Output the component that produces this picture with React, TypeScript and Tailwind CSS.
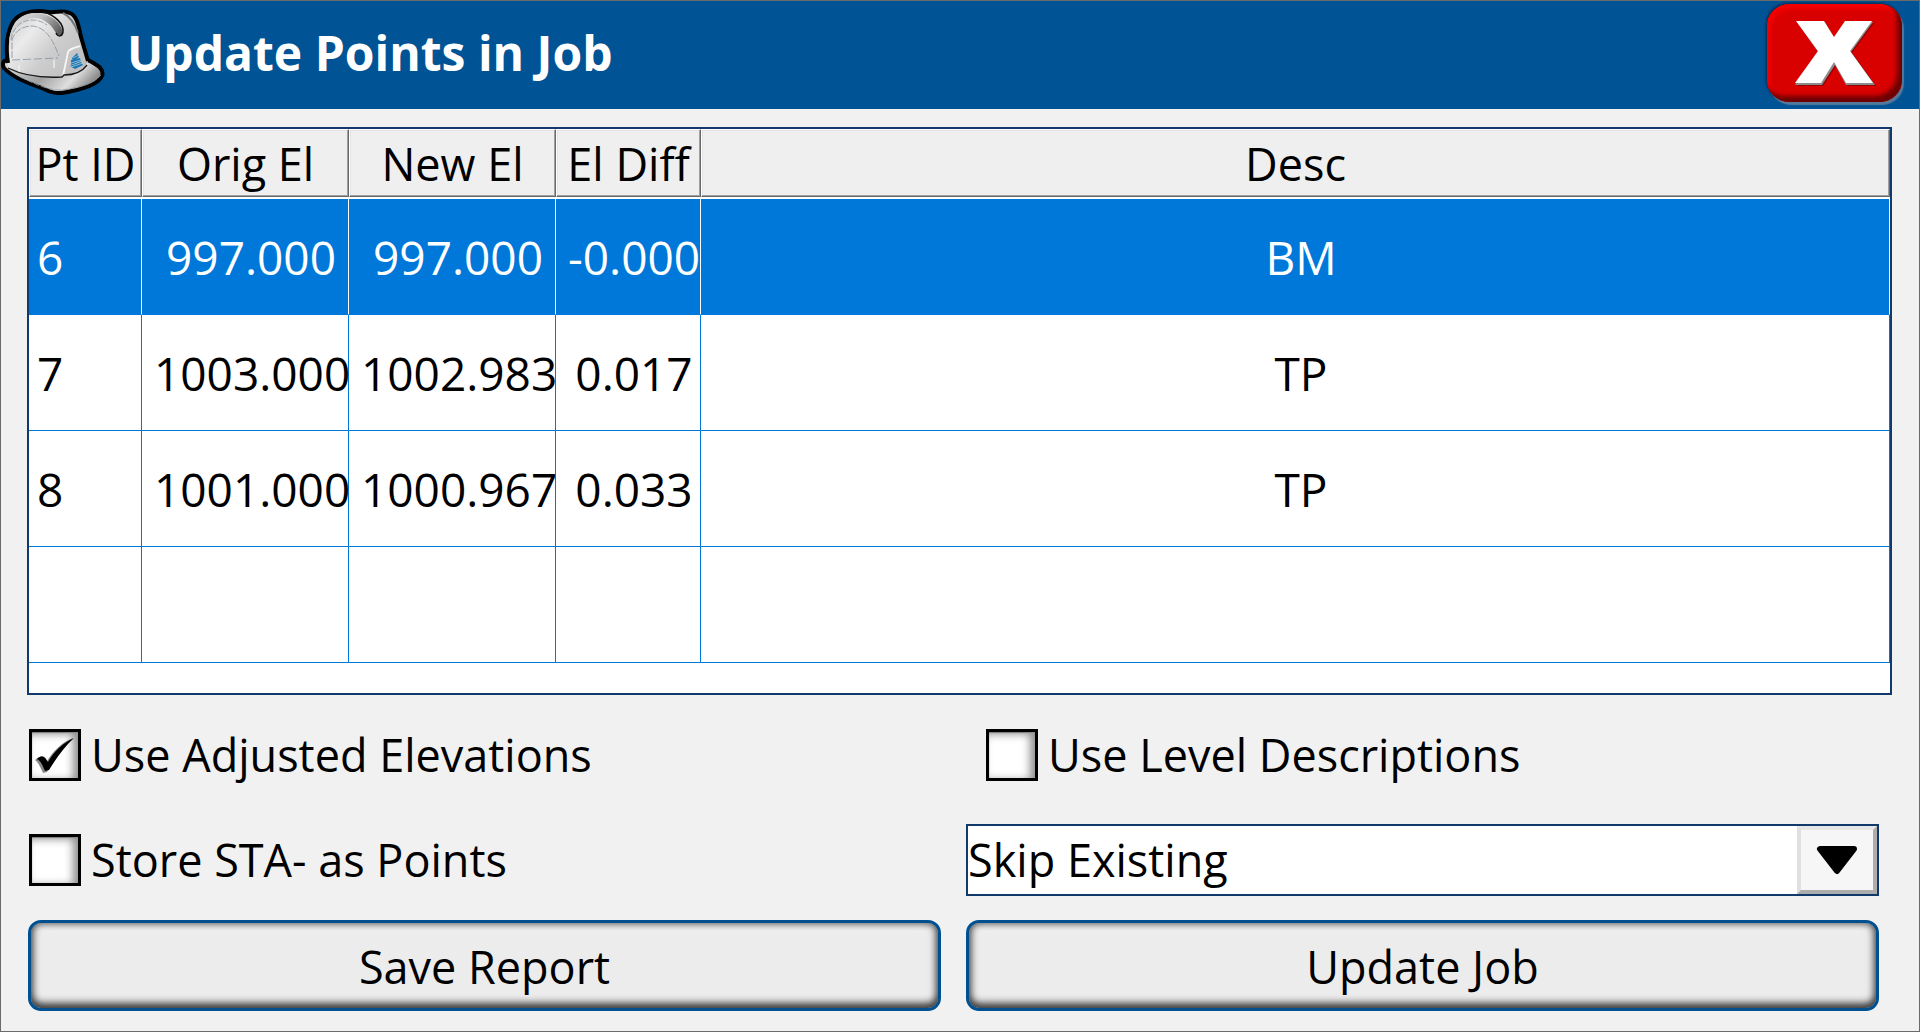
import { useState } from "react"

const headers = ["Pt ID", "Orig El", "New El", "El Diff", "Desc"]

const points = [
  { id: "6", orig: "997.000", next: "997.000", diff: "-0.000", desc: "BM" },
  { id: "7", orig: "1003.000", next: "1002.983", diff: "0.017", desc: "TP" },
  { id: "8", orig: "1001.000", next: "1000.967", diff: "0.033", desc: "TP" },
  { id: "", orig: "", next: "", diff: "", desc: "" },
]

const HardHat = () => (
  <svg viewBox="1 1 106 98" className="h-[98px] w-[106px] shrink-0" aria-hidden="true">
    <defs>
      <linearGradient id="dome" x1="0" y1="0.1" x2="1" y2="0.8">
        <stop offset="0" stopColor="#c9c9c9" />
        <stop offset="0.3" stopColor="#ebebeb" />
        <stop offset="0.6" stopColor="#cdcdcd" />
        <stop offset="1" stopColor="#bdbdbd" />
      </linearGradient>
      <linearGradient id="brim" x1="0" y1="0" x2="1" y2="0.3">
        <stop offset="0" stopColor="#dcdcdc" />
        <stop offset="0.5" stopColor="#a2a2a2" />
        <stop offset="0.8" stopColor="#dedede" />
        <stop offset="1" stopColor="#8f8f8f" />
      </linearGradient>
      <linearGradient id="ridge" x1="0" y1="0" x2="1" y2="0.5">
        <stop offset="0" stopColor="#e4e4e4" />
        <stop offset="0.55" stopColor="#bcbcbc" />
        <stop offset="1" stopColor="#5e5e5e" />
      </linearGradient>
    </defs>
    <path
      d="M8 60C3 60 2 64 4 68C14 79 32 84 44 89C54 94 60 94 72 91C86 88 99 83 102 76C105 68 95 64 88 60"
      fill="url(#brim)"
      stroke="#000"
      strokeWidth="4"
      strokeLinejoin="round"
    />
    <path
      d="M8 67C6 50 6 34 13 22C19 13 30 11 40 11C46 11 50 13 54 12C62 11 70 11 74 16C79 22 79 30 81 37L88 61C84 70 74 73 62 77C42 77 22 75 8 67Z"
      fill="url(#dome)"
    />
    <path
      d="M8 63C6 50 6 34 13 22C19 13 30 11 40 11C46 11 50 13 54 12C62 11 70 11 74 16C79 22 79 30 81 37L88 61"
      fill="none"
      stroke="#000"
      strokeWidth="4"
      strokeLinejoin="round"
    />
    <path d="M9 40C12 22 22 13 34 13C50 13 62 22 63 34C61 36 58 35 56 33C50 22 42 18 33 18C20 19 13 28 9 42Z" fill="url(#ridge)" />
    <path d="M43 12C55 15 64 24 63 32C62 37 58 37 56 33" fill="none" stroke="#111" strokeWidth="1.5" />
    <path d="M63 13C71 17 75 24 78 33" fill="none" stroke="#777" strokeWidth="2" />
    <path d="M11 40C13 26 23 20 32 20C38 20 43 22 47 25" fill="none" stroke="#7f93a5" strokeWidth="0.8" strokeDasharray="6 1.5" />
    <path d="M12 58V40C15 30 24 26 32 26C46 27 53 40 59 56" fill="none" stroke="#7f93a5" strokeWidth="0.8" strokeDasharray="7 1.5" />
    <path d="M12 60L58 58" fill="none" stroke="#7f93a5" strokeWidth="0.8" strokeDasharray="8 3" />
    <path d="M19 65V73M54 60V68" fill="none" stroke="#f4f4f4" strokeWidth="1.2" />
    <path d="M63 76L68 52C69 49 73 48 80 46" fill="none" stroke="#f6f6f6" strokeWidth="1.8" />
    <path d="M8 68C24 76 44 78 62 77L64 75C74 75 82 72 87 65" fill="none" stroke="#1a1a1a" strokeWidth="1.3" />
    <path d="M20 77C34 83 44 89 57 90C74 90 92 84 101 75" fill="none" stroke="#8996a0" strokeWidth="0.8" strokeDasharray="6 1.5" />
    <path d="M77 53L79 57L73 61L72 58ZM71 60L80 58L81 61L71 65ZM70 66L81 62L83 65L75 69Z" fill="#1878b8" />
    <path d="M73 58L79 55M71 63L81 60M71 67L83 63" fill="none" stroke="#b9cbd8" strokeWidth="0.7" />
  </svg>
)

const CloseButton = () => (
  <button
    aria-label="Close"
    className="mr-[17px] flex h-[98px] w-[135px] shrink-0 items-center justify-center rounded-[22px] bg-[#d90000] shadow-[inset_-5px_-6px_4px_#6d0000,inset_3px_5px_4px_#f40000,2px_3px_1px_#54789a,-1px_-1px_3px_#00284e]">
    <svg viewBox="0 0 82 68" className="h-[68px] w-[82px]" aria-hidden="true">
      <path d="M4 4H32L41 21L53 4H80L58 34L82 67H54L42 47L29 67H3L25 34Z" fill="#5c0000" opacity="0.55" />
      <path d="M3 3H31L40 20L52 3H79L57 33L81 66H52L41 46L28 66H1L24 33Z" fill="#8c8c8c" />
      <path d="M2 2H30L40 18L51 2H78L56 32L79 64H52L40 43L27 64H1L24 32Z" fill="#fff" />
    </svg>
  </button>
)

type CheckProps = {
  label: string
  checked: boolean
  onChange: (checked: boolean) => void
}

const Check = ({ label, checked, onChange }: CheckProps) => (
  <label className="flex h-[52px] items-center gap-2.5">
    <span className="relative h-[52px] w-[52px] shrink-0">
      <input
        type="checkbox"
        checked={checked}
        onChange={(e) => onChange(e.target.checked)}
        className="block h-full w-full appearance-none border-[3px] border-black bg-white shadow-[inset_-5px_2px_8px_#8e8e8e,inset_0_1px_1px_#666]"
      />
      {checked && (
        <svg viewBox="0 0 52 52" className="pointer-events-none absolute inset-0" aria-hidden="true">
          <path d="M6 31C9 28 11 27 13 28C15 29 16 33 17 34C23 23 33 13 44 9C35 17 26 29 18 43L14 44C12 40 10 34 6 31Z" fill="#888" />
          <path d="M8 30C10 28 13 26 15 28C17 29 18 32 19 33C25 22 35 13 45 9C36 17 28 28 20 41L16 42C14 38 13 33 8 30Z" fill="#000" />
        </svg>
      )}
    </span>
    <span className="whitespace-nowrap">{label}</span>
  </label>
)

const PushButton = ({ children }: { children: string }) => (
  <button className="h-[91px] rounded-[13px] border-[3px] border-[#00508f] bg-[#ececec] pt-0.5 shadow-[inset_0_-5px_8px_-1px_#3c3c3c,inset_0_0_9px_1px_#555,inset_0_12px_4px_-3px_#f8f8f8]">
    {children}
  </button>
)

const PointsTable = () => {
  const [selected, setSelected] = useState(0)

  return (
    <div className="ml-[26px] mr-[27px] flex-1 border-2 border-[#12396b] bg-white">
      <table className="w-full table-fixed border-separate border-spacing-0 whitespace-nowrap">
        <colgroup>
          <col className="w-[113px]" />
          <col className="w-[207px]" />
          <col className="w-[207px]" />
          <col className="w-[145px]" />
          <col />
        </colgroup>
        <thead>
          <tr className="h-[68px]">
            {headers.map((header) => (
              <th
                key={header}
                className="border border-t-white border-r-[#696969] border-b-[#696969] border-l-white bg-[#efefef] p-0 pt-0.5 font-normal shadow-[inset_-1px_-1px_0_#a0a0a0,inset_1px_1px_0_#e3e3e3]">
                {header}
              </th>
            ))}
          </tr>
          <tr className="h-0.5" />
        </thead>
        <tbody className="text-[46px]">
          {points.map((point, index) => (
            <tr
              key={index}
              onClick={() => setSelected(index)}
              className={`h-[116px] ${
                index === selected
                  ? "bg-[#0078d9] text-white *:border-r-white *:border-b-[#0078d9]"
                  : "*:border-[#0078d9]"
              } *:border-r *:border-b *:p-0`}>
              <td>
                <span className="pl-2">{point.id}</span>
              </td>
              <td className="text-center">
                <span className="pl-3">{point.orig}</span>
              </td>
              <td className="text-center">
                <span className="pl-3">{point.next}</span>
              </td>
              <td className="text-center">
                <span className="pl-3">{point.diff}</span>
              </td>
              <td className="text-center">
                <span className="pl-3">{point.desc}</span>
              </td>
            </tr>
          ))}
        </tbody>
      </table>
    </div>
  )
}

const App = () => {
  const [adjusted, setAdjusted] = useState(true)
  const [levelDesc, setLevelDesc] = useState(false)
  const [storeSta, setStoreSta] = useState(false)

  return (
    <div className="flex min-h-screen flex-col border border-[#6b6b6b] bg-[#f1f1f1] font-['Open_Sans',sans-serif] text-[45px] leading-[52px] text-black">
      <header className="mb-[18px] flex h-[108px] items-center bg-[#005495] pb-1">
        <div className="self-start">
          <HardHat />
        </div>
        <h1 className="ml-5 flex-1 text-[48px] font-bold text-white">Update Points in Job</h1>
        <CloseButton />
      </header>

      <PointsTable />

      <div className="mt-[34px] mr-10 mb-5 ml-[27px] grid grid-cols-2 gap-x-[25px]">
        <div className="pl-px">
          <Check label="Use Adjusted Elevations" checked={adjusted} onChange={setAdjusted} />
        </div>
        <div className="pl-5">
          <Check label="Use Level Descriptions" checked={levelDesc} onChange={setLevelDesc} />
        </div>

        <div className="mt-[43px] mb-6 flex items-center pl-px">
          <Check label="Store STA- as Points" checked={storeSta} onChange={setStoreSta} />
        </div>
        <div className="relative mt-[43px] mb-6">
          <select
            aria-label="Existing points"
            className="block h-[72px] w-full appearance-none border-2 border-[#12396b] bg-white leading-[68px]">
            <option>Skip Existing</option>
            <option>Overwrite Existing</option>
          </select>
          <span className="pointer-events-none absolute top-0.5 right-0.5 flex h-[68px] w-20 items-center justify-center border-[4px] border-t-[#e6e6e6] border-r-[#adadad] border-b-[#adadad] border-l-[#e0e0e0] bg-[#f6f6f6]">
            <svg viewBox="0 0 42 30" className="h-[30px] w-[42px]" aria-hidden="true">
              <path d="M4 4H38L21 26Z" stroke="#000" strokeWidth="6" strokeLinejoin="round" />
            </svg>
          </span>
        </div>

        <PushButton>Save Report</PushButton>
        <PushButton>Update Job</PushButton>
      </div>
    </div>
  )
}

export default App
